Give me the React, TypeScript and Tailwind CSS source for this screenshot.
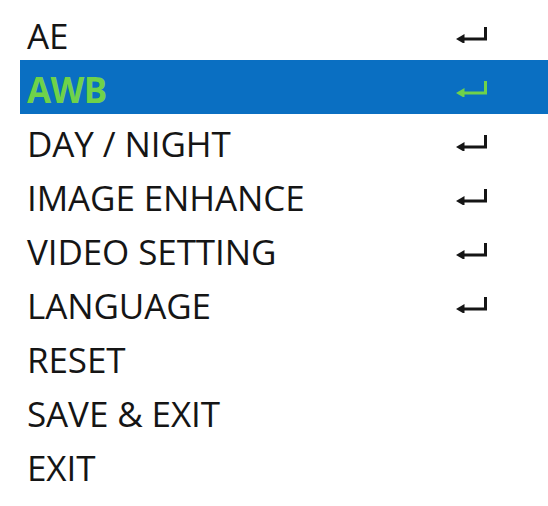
const items = [
  { label: 'AE', enter: true },
  { label: 'AWB', enter: true, active: true },
  { label: 'DAY / NIGHT', enter: true },
  { label: 'IMAGE ENHANCE', enter: true },
  { label: 'VIDEO SETTING', enter: true },
  { label: 'LANGUAGE', enter: true },
  { label: 'RESET' },
  { label: 'SAVE & EXIT' },
  { label: 'EXIT' },
]

function EnterArrow({ color }: { color: string }) {
  return (
    <svg width="34" height="16" viewBox="0 0 34 16" fill="none" className="mt-[4px]">
      <path d="M30.5 0 V12 H7" stroke={color} strokeWidth="3" />
      <path d="M1 12 L9.5 7 V17 Z" fill={color} />
    </svg>
  )
}

export default function App() {
  return (
    <div
      className="w-[548px] h-[506px] bg-white pt-[6px] overflow-hidden"
      style={{ fontFamily: '"Open Sans", "Noto Sans", sans-serif' }}
    >
      {items.map(item => (
        <div
          key={item.label}
          className={`ml-5 h-[54px] flex items-center pl-[7px] ${item.active ? 'bg-[#0a6fc2]' : ''}`}
        >
          <span
            className={`w-[428px] text-[35px] leading-none tracking-[-0.1px] pt-[4px] ${
              item.active ? 'font-bold tracking-[-0.6px] text-[#6fd24a]' : 'font-medium text-[#151515]'
            }`}
          >
            {item.label}
          </span>
          {item.enter && <EnterArrow color={item.active ? '#6fd24a' : '#151515'} />}
        </div>
      ))}
    </div>
  )
}
